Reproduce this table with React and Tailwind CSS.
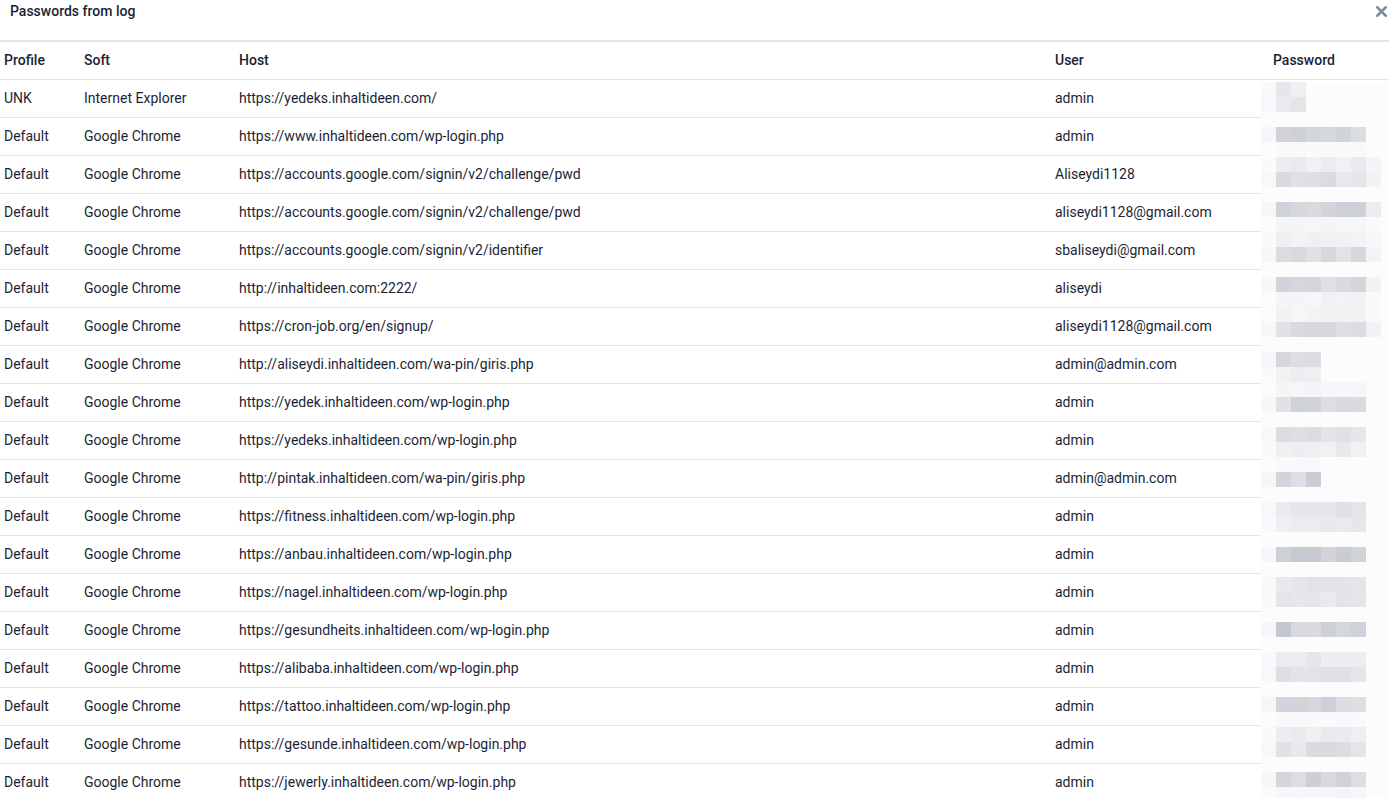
import { X } from "lucide-react";

const rows = [
  ["UNK", "Internet Explorer", "https://yedeks.inhaltideen.com/", "admin", 2],
  ["Default", "Google Chrome", "https://www.inhaltideen.com/wp-login.php", "admin", 6],
  ["Default", "Google Chrome", "https://accounts.google.com/signin/v2/challenge/pwd", "Aliseydi1128", 7],
  ["Default", "Google Chrome", "https://accounts.google.com/signin/v2/challenge/pwd", "aliseydi1128@gmail.com", 7],
  ["Default", "Google Chrome", "https://accounts.google.com/signin/v2/identifier", "sbaliseydi@gmail.com", 7],
  ["Default", "Google Chrome", "http://inhaltideen.com:2222/", "aliseydi", 7],
  ["Default", "Google Chrome", "https://cron-job.org/en/signup/", "aliseydi1128@gmail.com", 7],
  ["Default", "Google Chrome", "http://aliseydi.inhaltideen.com/wa-pin/giris.php", "admin@admin.com", 3],
  ["Default", "Google Chrome", "https://yedek.inhaltideen.com/wp-login.php", "admin", 6],
  ["Default", "Google Chrome", "https://yedeks.inhaltideen.com/wp-login.php", "admin", 6],
  ["Default", "Google Chrome", "http://pintak.inhaltideen.com/wa-pin/giris.php", "admin@admin.com", 3],
  ["Default", "Google Chrome", "https://fitness.inhaltideen.com/wp-login.php", "admin", 6],
  ["Default", "Google Chrome", "https://anbau.inhaltideen.com/wp-login.php", "admin", 6],
  ["Default", "Google Chrome", "https://nagel.inhaltideen.com/wp-login.php", "admin", 6],
  ["Default", "Google Chrome", "https://gesundheits.inhaltideen.com/wp-login.php", "admin", 6],
  ["Default", "Google Chrome", "https://alibaba.inhaltideen.com/wp-login.php", "admin", 6],
  ["Default", "Google Chrome", "https://tattoo.inhaltideen.com/wp-login.php", "admin", 6],
  ["Default", "Google Chrome", "https://gesunde.inhaltideen.com/wp-login.php", "admin", 6],
  ["Default", "Google Chrome", "https://jewerly.inhaltideen.com/wp-login.php", "admin", 6],
];

const cols = "grid grid-cols-[80px_155px_816px_218px_1fr]";

function hash(a, b) {
  const s = Math.sin(a * 127.1 + b * 311.7) * 43758.5453;
  return s - Math.floor(s);
}

// blurred password column, 15px mosaic blocks
function Mosaic() {
  const cells = [];
  for (let k = 0; k < 48; k++) {
    const y0 = 82 + 15 * k;
    let best = 0;
    let len = 0;
    rows.forEach((r, i) => {
      const t0 = 91 + 38 * i;
      const t1 = 105 + 38 * i;
      const ov = Math.max(0, Math.min(y0 + 15, t1) - Math.max(y0, t0)) / 14;
      if (ov > best) {
        best = ov;
        len = r[4];
      }
    });
    for (let c = 0; c < 9; c++) {
      let amt = 0;
      if (c >= 1 && c <= len) amt = best * (0.55 + 0.45 * hash(k, c));
      if (c === len && len === 7) amt *= 0.35;
      if (c === 0) amt = best * 0.12;
      const light = [252, 252, 253];
      const dark = [196, 199, 207];
      const col = light.map((l, j) => Math.round(l + (dark[j] - l) * amt));
      cells.push(
        <div key={k + "-" + c} style={{ background: `rgb(${col.join(",")})` }} />
      );
    }
  }
  return (
    <div className="absolute left-[1261px] top-[82px] grid w-[135px] grid-cols-[repeat(9,15px)] auto-rows-[15px]">
      {cells}
    </div>
  );
}

export default function App() {
  return (
    <div className="relative h-[798px] w-[1389px] overflow-hidden bg-white font-['Roboto',sans-serif] text-[14px] text-[#1b1f35]">
      <div className="flex h-[42px] items-start justify-between border-b-2 border-[#e1e4ee]">
        <div className="pl-[10px] pt-[2px] text-[14px] font-medium leading-[18px]">
          Passwords from log
        </div>
        <button className="mr-[-1px] mt-[3px] text-[#7a8c99]">
          <X size={17} strokeWidth={3.5} />
        </button>
      </div>
      <div className={`${cols} h-[38px] items-center border-b border-[#e3e5ee] font-medium`}>
        <div className="pl-[4px]">Profile</div>
        <div className="pl-[4px]">Soft</div>
        <div className="pl-[4px]">Host</div>
        <div className="pl-[4px]">User</div>
        <div className="pl-[4px]">Password</div>
      </div>
      {rows.map((r, i) => (
        <div key={i} className={`${cols} h-[38px] items-center border-b border-[#e3e5ee]`}>
          <div className="pl-[4px]">{r[0]}</div>
          <div className="pl-[4px]">{r[1]}</div>
          <div className="pl-[4px]">{r[2]}</div>
          <div className="pl-[4px]">{r[3]}</div>
          <div />
        </div>
      ))}
      <Mosaic />
    </div>
  );
}
